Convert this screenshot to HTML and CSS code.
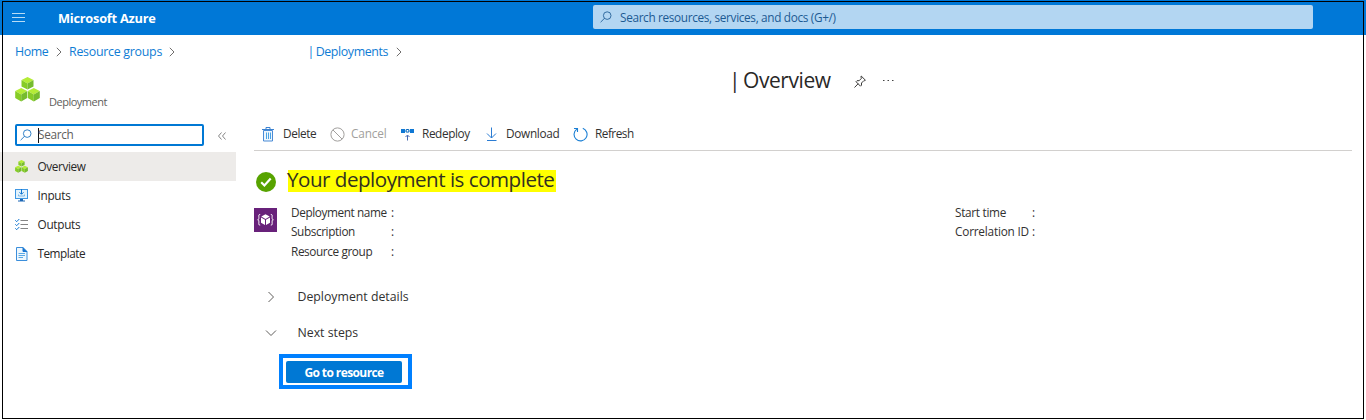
FILE: index.html
```
<!DOCTYPE html>
<html lang="en">
<head>
<meta charset="utf-8">
<title>Deployment | Overview - Microsoft Azure</title>
<link rel="stylesheet" href="styles.css">
</head>
<body>
<svg class="defs" width="0" height="0">
  <symbol id="cubes" viewBox="0 0 25 25">
    <path fill="#b4ec36" d="M12.500 0l6 3-6 3.500-6-3.500zM6.200 11l6 3-6 3.500-6-3.500zM18.800 11l6 3-6 3.500-6-3.500z"/>
    <path fill="#86cc26" d="M6.500 3l6 3.500v6l-6-3zM.200 14l6 3.500v7l-6-3.500zM12.800 14l6 3.500v7l-6-3.500z"/>
    <path fill="#76bc2d" d="M18.500 3v6.500l-6 3v-6zM12.200 14v7l-6 3.500v-7zM24.800 14v7l-6 3.500v-7z"/>
  </symbol>
  <symbol id="glass" viewBox="0 0 12 12">
    <circle cx="7.200" cy="4.600" r="3.800" fill="none" stroke="currentColor" stroke-width=".85"/><path d="M4.500 7.300L.600 11.200" stroke="currentColor" fill="none" stroke-width=".85"/>
  </symbol>
  <symbol id="chev" viewBox="0 0 6 10"><path d="M.800.800L5 5 .800 9.200" fill="none" stroke="currentColor" stroke-width=".9"/></symbol>
</svg>
<header class="topbar">
  <svg class="burger" width="13" height="10" viewBox="0 0 13 10"><path d="M0 .5h13M0 4.500h13M0 8.500h13" stroke="#b8dcf5" fill="none"/></svg>
  <span class="brand">Microsoft Azure</span>
  <div class="global-search"><svg width="12" height="12"><use href="#glass"/></svg><span class="global-text">Search resources, services, and docs (G+/)</span></div>
</header>
<nav class="crumbs">
  <a class="c-home">Home</a><svg class="sep" width="6" height="10"><use href="#chev"/></svg>
  <a class="c-groups">Resource groups</a><svg class="sep" width="6" height="10"><use href="#chev"/></svg>
  <a class="c-dep">| Deployments</a><svg class="sep" width="6" height="10"><use href="#chev"/></svg>
</nav>
<div class="heading">
  <svg class="logo" width="25" height="25"><use href="#cubes"/></svg>
  <span class="kind">Deployment</span>
  <h1>| Overview</h1>
  <svg class="pin" width="12" height="13" viewBox="0 0 12 13"><path d="M7.200 1l4.200 4.200-1 .5-.4-.2-2.500 2.500v2.200l-1 1L2 6.700l1-1h2.200l2.300-2.500-.5-1zM4.200 8.700L.500 12.500" fill="none" stroke="#3b3a39"/></svg>
  <svg class="more" width="11" height="3" viewBox="0 0 11 3"><path d="M0 1h1.500v1H0zM4.500 1H6v1H4.500zM9 1h1.500v1H9z" fill="#444"/></svg>
</div>
<div class="workspace">
  <aside class="side">
    <div class="find-row">
      <div class="find"><svg width="12" height="12"><use href="#glass"/></svg><span class="caret"></span><span class="find-text">Search</span></div>
      <svg class="collapse" width="8" height="8" viewBox="0 0 8 8"><path d="M3.500.5L.500 4l3 3.500M7.500.5l-3 3.500 3 3.500" fill="none" stroke="#666" stroke-width=".8"/></svg>
    </div>
    <div class="item active"><svg width="13" height="13"><use href="#cubes"/></svg><span class="t-over">Overview</span></div>
    <div class="item"><svg width="13" height="13" viewBox="0 0 13 13"><path fill="#3f97e3" d="M0 0h13v10H0z"/><path fill="#e4f3fc" d="M1 1h11v8H1z"/><path fill="#1b66b5" d="M5 10h3v1.500h2v1H3v-1h2z"/><path d="M6.500 0v5M4.500 3.300l2 2 2-2" fill="none" stroke="#0f75d1"/><path d="M3.500 5.500v1.500h6V5.500" fill="none" stroke="#7db8e8"/></svg><span class="t-in">Inputs</span></div>
    <div class="item"><svg width="13" height="13" viewBox="0 0 13 13"><path d="M5.500 2.500H13M5.500 6.500H13M5.500 10.500H13" stroke="#858585" stroke-width="1.200"/><path d="M.300 2.300l1.400 1.400L4.300 1M.300 6.300l1.400 1.400L4.300 5M.300 10.300l1.400 1.400L4.300 9" fill="none" stroke="#0f75d1"/></svg><span class="t-out">Outputs</span></div>
    <div class="item"><svg width="13" height="14" viewBox="0 0 13 14"><path d="M1.500.5h6.500l4 4v9h-10.500z" fill="#eef7fd" stroke="#3b8edb"/><path d="M8 .5v4h4" fill="#1b76d0" stroke="#1b76d0"/><path d="M3.500 6.500h6.500M3.500 8.500h6.500M3.500 10.500h4.500" stroke="#5aa9e6"/></svg><span class="t-temp">Template</span></div>
  </aside>
  <main class="content">
    <div class="toolbar">
      <div class="tool w-del"><svg width="14" height="15" viewBox="0 0 14 15"><path d="M2.500 3.500h9v10.500h-9z" fill="#eef6fc" stroke="#4a8bd6"/><path d="M1 2.500h12M5 2V.500h4V2" fill="none" stroke="#3b82d0"/><path d="M5.500 5.500v6.500M7.500 5.500v6.500M9.500 5.500v6.500" fill="none" stroke="#4aa3e4"/></svg><span class="t-del">Delete</span></div>
      <div class="tool w-can disabled"><svg width="15" height="15" viewBox="0 0 15 15"><circle cx="7.500" cy="7.500" r="6.600" fill="none" stroke="#a19f9d"/><path d="M2.900 2.900l9.200 9.200" stroke="#a19f9d"/></svg><span class="t-can">Cancel</span></div>
      <div class="tool w-red"><svg width="13" height="13" viewBox="0 0 13 13"><path fill="#0f78d4" d="M0 1h4v4H0zM9 1h4v4H9z"/><path d="M4 3h5" stroke="#55a5e6"/><path fill="#fff" stroke="#0f6cbd" d="M5.200 1.500h2.600v2.600H5.200z"/><path fill="none" stroke="#4668b1" d="M6.500 12.500v-5M4.500 9l2-2 2 2"/></svg><span class="t-red">Redeploy</span></div>
      <div class="tool w-dow"><svg width="11" height="15" viewBox="0 0 11 15"><path d="M5.500.5v10.500M1 6.500L5.500 11 10 6.500M1 13.500h9.500" fill="none" stroke="#2b7cd3"/></svg><span class="t-dow">Download</span></div>
      <div class="tool w-ref"><svg width="15" height="15" viewBox="0 0 15 15"><path d="M3.800 2.100a6.500 6.500 0 1 0 6-.8M1 1.500h3.500V5" fill="none" stroke="#1b7fd4" stroke-width="1.100"/></svg><span class="t-ref">Refresh</span></div>
    </div>
    <div class="status">
      <svg width="20" height="20" viewBox="0 0 20 20"><circle cx="10" cy="10" r="10" fill="#57a300"/><path d="M5.200 10.300l3.200 3.200 6.300-7" fill="none" stroke="#fff" stroke-width="2.200"/></svg>
      <h2><span class="t-status">Your deployment is complete</span></h2>
    </div>
    <div class="facts">
      <svg width="23" height="24" viewBox="0 0 23 24"><path fill="#68217a" d="M0 0h23v24H0z"/><path fill="#fff" d="M11.500 6.300l4.200 2.300-4.200 2.300-4.200-2.300zM7 9.500l4 2.200v5.400l-4-2.300zM16 9.500l-4 2.200v5.400l4-2.300z"/><path d="M6.200 6.500c-2 0-1.300 1.300-1.300 3 0 1.500-.3 2.300-1.200 2.300.9 0 1.200.8 1.200 2.300 0 1.700-.7 3 1.300 3M16.800 6.500c2 0 1.300 1.300 1.300 3 0 1.500.3 2.300 1.200 2.300-.9 0-1.200.8-1.200 2.300 0 1.700.7 3-1.300 3" fill="none" stroke="#fff"/></svg>
      <dl class="left"><dt><span class="t-dn">Deployment name</span></dt><dd>:</dd><dt><span class="t-sub">Subscription</span></dt><dd>:</dd><dt><span class="t-rg">Resource group</span></dt><dd>:</dd></dl>
      <dl class="right"><dt><span class="t-st">Start time</span></dt><dd>:</dd><dt><span class="t-cor">Correlation ID</span></dt><dd>:</dd></dl>
    </div>
    <div class="section"><svg width="12" height="12" viewBox="0 0 12 12"><path d="M3.500 1L8.500 6l-5 5" fill="none" stroke="#605e5c"/></svg><span class="t-dd">Deployment details</span></div>
    <div class="section"><svg width="12" height="12" viewBox="0 0 12 12"><path d="M1 3.500L6 8.500l5-5" fill="none" stroke="#605e5c"/></svg><span class="t-ns">Next steps</span></div>
    <div class="callout"><button class="go"><span class="t-go">Go to resource</span></button></div>
  </main>
</div>
<div class="frame"></div>
</body>
</html>
```
FILE: styles.css
```
* { box-sizing: border-box; }
body { margin: 0; height: 420px; overflow: hidden; position: relative; background: #fff; color: #323130; font: 11.8px/20px "Open Sans", "Noto Sans", sans-serif; letter-spacing: -.4px; white-space: nowrap; }
svg { display: block; flex: none; }
.defs { display: none; }
.frame { position: absolute; inset: 1px 2px 1px 2px; border: 1px solid #000; pointer-events: none; }
.topbar { display: flex; height: 35px; background: #0078d7; padding-left: 12px; }
.burger { margin-top: 13px; }
.brand { width: 535px; margin: 8px 0 0 33px; color: #fff; font-weight: 700; font-size: 12.8px; letter-spacing: -.25px; }
.global-search { display: flex; align-items: center; gap: 8px; width: 720px; height: 24px; margin-top: 5px; padding-left: 7px; background: #b3d6f2; border-radius: 2px; color: #1c5a92; }
.global-text { letter-spacing: -.34px; }
.crumbs { display: flex; align-items: center; height: 20px; margin: 7px 0 0 15px; color: #0f7cd4; font-size: 12.4px; }
.crumbs a { color: inherit; }
.sep { color: #605e5c; margin-left: 7px; }
.c-home { width: 34px; }
.c-groups { width: 93px; margin-left: 7px; letter-spacing: -.27px; }
.c-dep { width: 81px; margin-left: 132.500px; word-spacing: -1px; }
.heading { display: flex; height: 62px; padding-left: 15px; }
.logo { margin-top: 15px; }
.kind { width: 680px; margin: 30px 0 0 9px; font-size: 11px; letter-spacing: -.5px; color: #605e5c; }
h1 { width: 105px; margin: 4px 0 0; font-size: 21px; line-height: 28px; letter-spacing: -.45px; word-spacing: -2px; font-weight: 400; color: #292827; }
.pin { margin: 13px 0 0 20px; }
.more { margin: 17px 0 0 17px; }
.workspace { display: grid; grid-template-columns: 236px 1fr; }
.side { color: #292827; }
.find-row { display: flex; align-items: center; padding-left: 15px; height: 22px; margin-bottom: 6px; }
.find { display: flex; align-items: center; width: 189px; height: 22px; border: 2px solid #0078d4; border-radius: 2px; padding-left: 3px; color: #0f6cbd; }
.find-text { color: #605e5c; letter-spacing: -.3px; }
.caret { width: 1px; height: 15px; margin-left: 6px; margin-right: -1px; background: #111; }
.collapse { margin-left: 14px; margin-top: 1px; }
.item { display: flex; align-items: center; gap: 9.500px; height: 29px; padding-left: 15px; }
.item span, .tool span, .find-text { margin-bottom: 1.500px; }
.active { background: #edebe9; }
.t-in, .t-out { letter-spacing: -.3px; }
.t-temp { letter-spacing: -.5px; }
.content { padding-left: 18px; }
.toolbar { display: flex; height: 27px; width: 1098px; padding-left: 7px; border-bottom: 1px solid #d2d0ce; }
.tool { display: flex; align-items: center; height: 20px; }
.disabled { color: #a19f9d; }
.w-del { width: 69px; gap: 8px; }
.w-can { width: 71px; gap: 6px; letter-spacing: -.15px; }
.w-red { width: 85px; gap: 8px; }
.w-dow { width: 87px; gap: 9px; letter-spacing: -.3px; }
.w-ref { gap: 7px; letter-spacing: -.5px; }
.status { display: flex; align-items: center; height: 24px; margin: 19px 0 0 2px; }
h2 { width: 268px; height: 22px; margin: -2px 0 0 12px; font-size: 20.6px; line-height: 19px; letter-spacing: -.5px; font-weight: 400; background: #ff0; color: #323120; }
.t-status { margin-left: -1px; }
.facts { display: flex; margin-top: 14px; height: 71px; }
.left, .right { display: grid; grid-auto-rows: 19.6px; align-content: start; margin: -6.500px 0 0; }
.left { grid-template-columns: 100px 10px; margin-left: 14px; width: 664px; }
.right { grid-template-columns: 77px 10px; }
dd { margin: 0; }
dt, dd { line-height: 20px; }
.t-st { letter-spacing: -.3px; }
.t-cor { letter-spacing: -.2px; }
.section { display: flex; align-items: center; gap: 20.500px; height: 36px; padding-left: 11px; font-size: 12.3px; font-weight: 500; letter-spacing: 0; }
.callout { width: 133px; height: 35px; margin: 3px 0 0 25px; border: 4px solid #0080ff; padding: 3px; }
.go { display: block; width: 116px; height: 22px; padding: 1px 0 0; border: 0; border-radius: 2px; background: #0078d4; color: #fff; font: 700 12px/22px "Open Sans", sans-serif; letter-spacing: -.6px; }
```
